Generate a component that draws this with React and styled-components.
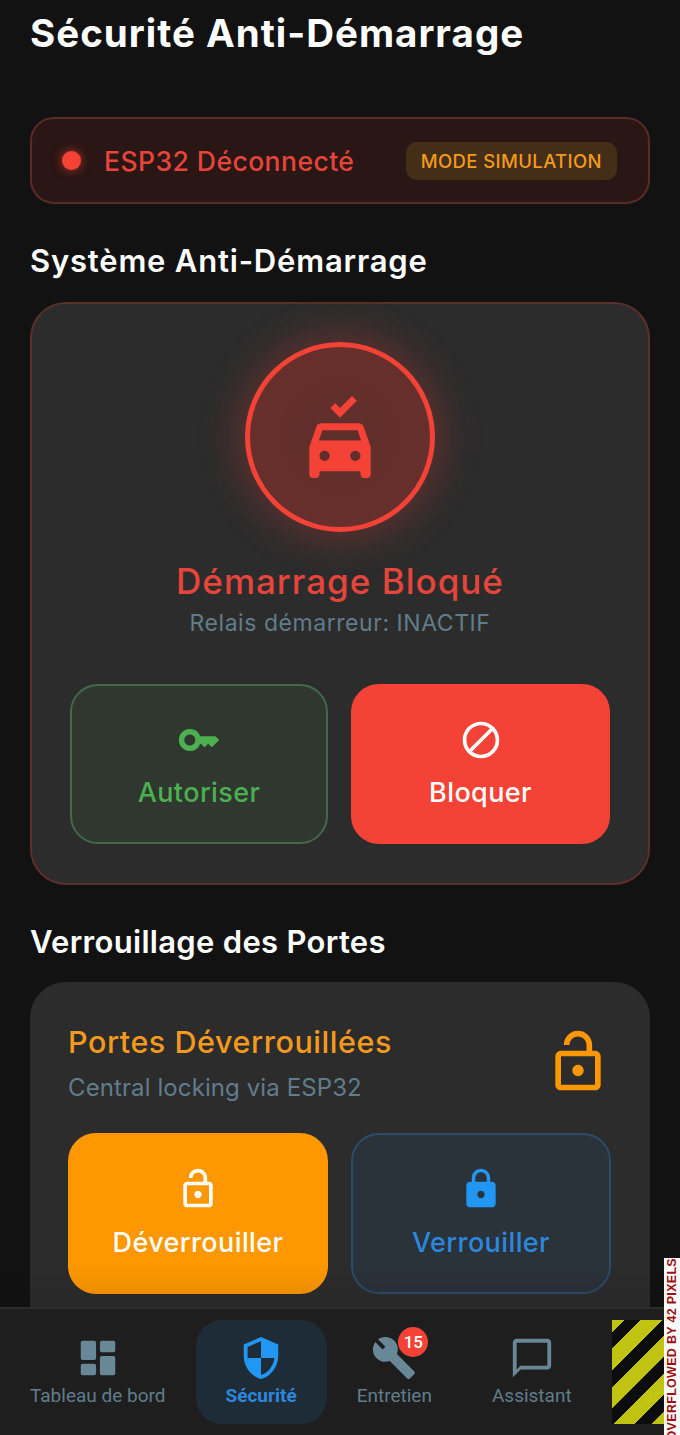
import React from 'react';
import styled, { createGlobalStyle } from 'styled-components';
import { MdNoCrash, MdKey, MdBlock, MdOutlineLockOpen, MdLock, MdSecurity, MdChatBubbleOutline, MdSettings } from 'react-icons/md';

const Global = createGlobalStyle`
  html, body { margin: 0; padding: 0; background: #121212; }
  * { box-sizing: border-box; }
`;
const Page = styled.div`
  position: relative; width: 680px; height: 1435px; display: flex; flex-direction: column;
  background: #121212; overflow: hidden; font-family: Inter, "Open Sans", sans-serif; color: #fff;
`;
const Main = styled.main`
  position: relative; flex: 1; min-height: 0; overflow: hidden; padding: 10px 30px 0;
`;
const Title = styled.h1`
  margin: 0; font-size: 38.5px; line-height: 46px; font-weight: 700; letter-spacing: 1px; white-space: nowrap;
`;
const Banner = styled.div`
  margin-top: 61px; height: 87px; display: flex; align-items: center; padding: 0 31px 0 30px;
  background: #2a1615; border: 2px solid #5a2a26; border-radius: 24px;
`;
const Dot = styled.span`
  width: 19px; height: 19px; border-radius: 50%; background: #f44336;
  box-shadow: 0 0 8px 1px rgba(244,67,54,.55);
`;
const BannerText = styled.span`
  margin-left: 23px; font-size: 26.5px; font-weight: 500; color: #e5453a; flex: 1; letter-spacing: .45px;
`;
const Badge = styled.span`
  height: 38px; display: flex; align-items: center; padding: 0 15px; border-radius: 11px;
  background: #442e18; color: #f39a1e; font-size: 18.5px; font-weight: 500; letter-spacing: .4px;
`;
const Section = styled.h2`
  margin: ${p => p.$top}px 0 0; font-size: 31px; line-height: 38px; font-weight: 600;
  letter-spacing: ${p => p.$spacing}px; white-space: nowrap;
`;
const Card = styled.section`
  margin-top: ${p => p.$top}px; background: #2c2c2c; border-radius: 36px;
  border: 2px solid ${p => p.$accent ? '#5b2f2c' : '#2c2c2c'};
  padding: ${p => p.$padding};
  ${p => p.$height ? `height: ${p.$height}px;` : ''}
`;
const Hero = styled.div`
  display: flex; flex-direction: column; align-items: center;
`;
const Ring = styled.div`
  width: 190px; height: 190px; border-radius: 50%; border: 5px solid #f44336;
  background: radial-gradient(circle, #5f2e2b 0%, #6b302c 100%);
  display: flex; align-items: center; justify-content: center;
  box-shadow: 0 0 38px 8px rgba(244,67,54,.26); color: #f44336; font-size: 82px;
`;
const HeroTitle = styled.div`
  margin-top: 27px; font-size: 35px; line-height: 44px; font-weight: 500; color: #e5453a; letter-spacing: 1px;
`;
const HeroSub = styled.div`
  margin-top: 5px; font-size: 23px; line-height: 30px; color: #607d8b; letter-spacing: .55px;
`;
const Buttons = styled.div`
  display: grid; grid-template-columns: ${p => p.$cols}; column-gap: ${p => p.$gap}px; margin-top: ${p => p.$top}px;
`;
const ActionButton = styled.button`
  height: ${p => p.$height}px; display: flex; flex-direction: column; align-items: center; justify-content: flex-start;
  row-gap: ${p => p.$height - 147}px;
  padding: 32px 0 0; border-radius: 28px; font-family: inherit; font-size: 27px; font-weight: 500; letter-spacing: .4px;
  background: ${p => p.$bg}; color: ${p => p.$fg}; border: 2px solid ${p => p.$border};
`;
const ButtonIcon = styled.span`
  height: 44px; font-size: 44px; line-height: 0; display: block; color: ${p => p.$color || 'inherit'};
`;
const ButtonLabel = styled.span`
  line-height: 36px;
`;
const LockHead = styled.div`
  display: flex; justify-content: space-between; align-items: center;
`;
const LockTitle = styled.div`
  font-size: 30.5px; line-height: 40px; font-weight: 500; color: #f39a1e; letter-spacing: .55px;
`;
const LockSub = styled.div`
  margin-top: 11px; font-size: 24px; line-height: 30px; color: #607d8b; letter-spacing: .1px;
`;
const LockIcon = styled.span`
  color: #ff9800; font-size: 68px; line-height: 0; margin: -2px 0 0 0;
`;
const Fade = styled.div`
  position: absolute; left: 0; right: 0; bottom: 0; height: 45px;
  background: linear-gradient(to bottom, rgba(0,0,0,0), rgba(0,0,0,.1));
`;
const Nav = styled.nav`
  position: relative; flex: none; height: 128px; background: #1e1e1e; border-top: 2px solid #2c2c2c;
  display: flex; align-items: flex-start; padding-top: 11px; overflow: hidden;
`;
const NavItem = styled.div`
  position: relative; flex: none; height: 104px; padding: 0 30px; display: flex; flex-direction: column; align-items: center;
  border-radius: 26px; background: ${p => p.$active ? '#1e2c38' : 'transparent'};
  color: ${p => p.$active ? '#2196f3' : '#688797'};
`;
const NavIcon = styled.span`
  position: relative; margin-top: 15px; font-size: 46px; line-height: 0; height: 46px; display: block;
`;
const NavLabel = styled.span`
  margin-top: 3px; font-family: Roboto, sans-serif; font-size: 19px; line-height: 24px; white-space: nowrap;
  font-weight: ${p => p.$active ? 700 : 400}; color: ${p => p.$active ? '#2b88dc' : '#607d8b'};
`;
const Count = styled.span`
  position: absolute; top: -8px; left: 27px; width: 30px; height: 30px; border-radius: 50%;
  background: #f44336; color: #fff; font-family: Roboto, sans-serif; font-size: 17px; font-weight: 500;
  display: flex; align-items: center; justify-content: center; line-height: 1;
`;
const Stripes = styled.div`
  position: absolute; left: 612px; top: 1320px; width: 52px; height: 104px;
  background: repeating-linear-gradient(135deg, #c8cc10 0 8.5px, #0b0b0b 8.5px 20.5px, #c8cc10 20.5px 27px);
  opacity: .95;
`;
const OverflowStrip = styled.div`
  position: absolute; left: 664px; top: 1258px; width: 16px; height: 177px; background: #fff;
  display: flex; align-items: flex-start; justify-content: center; overflow: hidden;
`;
const OverflowText = styled.span`
  writing-mode: vertical-rl; transform: rotate(180deg); color: #a01010; white-space: nowrap;
  font-family: "Liberation Sans", sans-serif; font-size: 12.5px; font-weight: 700; letter-spacing: .3px; line-height: 16px;
`;

const DashboardIcon = () => (
  <svg width="1em" height="1em" viewBox="0 0 24 24" fill="currentColor">
    <rect x="3" y="3" width="8" height="10" rx="1" />
    <rect x="13" y="3" width="8" height="6" rx="1" />
    <rect x="3" y="15" width="8" height="6" rx="1" />
    <rect x="13" y="11" width="8" height="10" rx="1" />
  </svg>
);
const WrenchIcon = () => (
  <svg width="1em" height="1em" viewBox="0 0 24 24" fill="currentColor">
    <path d="M22.61 18.99l-9.08-9.08c.93-2.34.45-5.1-1.44-7C9.79.61 6.21.4 3.66 2.26L7.5 6.11 6.08 7.52 2.25 3.69C.39 6.23.6 9.82 2.9 12.11c1.86 1.86 4.57 2.35 6.89 1.48l9.11 9.11c.39.39 1.02.39 1.41 0l2.3-2.3c.4-.38.4-1.02 0-1.41z" />
  </svg>
);

const navItems = [
  { label: 'Tableau de bord', icon: <DashboardIcon /> },
  { label: 'Sécurité', icon: <MdSecurity />, active: true },
  { label: 'Entretien', icon: <WrenchIcon />, count: 15 },
  { label: 'Assistant', icon: <MdChatBubbleOutline /> },
  { label: 'Paramètres', icon: <MdSettings /> },
];

export default function App() {
  return (
    <Page>
      <Global />
      <Main>
        <Title>Sécurité Anti-Démarrage</Title>
        <Banner>
          <Dot />
          <BannerText>ESP32 Déconnecté</BannerText>
          <Badge>MODE SIMULATION</Badge>
        </Banner>
        <Section $top={38} $spacing={0.8}>Système Anti-Démarrage</Section>
        <Card $top={22} $accent $padding="38px 38px 39px">
          <Hero>
            <Ring><MdNoCrash /></Ring>
            <HeroTitle>Démarrage Bloqué</HeroTitle>
            <HeroSub>Relais démarreur: INACTIF</HeroSub>
          </Hero>
          <Buttons $cols="258px 259px" $gap={23} $top={46}>
            <ActionButton $height={160} $bg="#2f372f" $fg="#4caf50" $border="#44694a">
              <ButtonIcon><MdKey /></ButtonIcon>
              <ButtonLabel>Autoriser</ButtonLabel>
            </ActionButton>
            <ActionButton $height={160} $bg="#f44336" $fg="#fff" $border="#f44336">
              <ButtonIcon><MdBlock /></ButtonIcon>
              <ButtonLabel>Bloquer</ButtonLabel>
            </ActionButton>
          </Buttons>
        </Card>
        <Section $top={38} $spacing={0.3}>Verrouillage des Portes</Section>
        <Card $top={21} $padding="38px 36px 0" $height={360}>
          <LockHead>
            <div>
              <LockTitle>Portes Déverrouillées</LockTitle>
              <LockSub>Central locking via ESP32</LockSub>
            </div>
            <LockIcon><MdOutlineLockOpen /></LockIcon>
          </LockHead>
          <Buttons $cols="260px 260px" $gap={23} $top={30}>
            <ActionButton $height={161} $bg="#ff9800" $fg="#fff" $border="#ff9800">
              <ButtonIcon><MdOutlineLockOpen /></ButtonIcon>
              <ButtonLabel>Déverrouiller</ButtonLabel>
            </ActionButton>
            <ActionButton $height={161} $bg="#2a323a" $fg="#2b88dc" $border="#2a4d6c">
              <ButtonIcon $color="#2196f3"><MdLock /></ButtonIcon>
              <ButtonLabel>Verrouiller</ButtonLabel>
            </ActionButton>
          </Buttons>
        </Card>
        <Fade />
      </Main>
      <Nav>
        {navItems.map(item => (
          <NavItem key={item.label} $active={item.active}>
            <NavIcon>
              {item.icon}
              {item.count ? <Count>{item.count}</Count> : null}
            </NavIcon>
            <NavLabel $active={item.active}>{item.label}</NavLabel>
          </NavItem>
        ))}
      </Nav>
      <Stripes />
      <OverflowStrip><OverflowText>OVERFLOWED BY 42 PIXELS</OverflowText></OverflowStrip>
    </Page>
  );
}
